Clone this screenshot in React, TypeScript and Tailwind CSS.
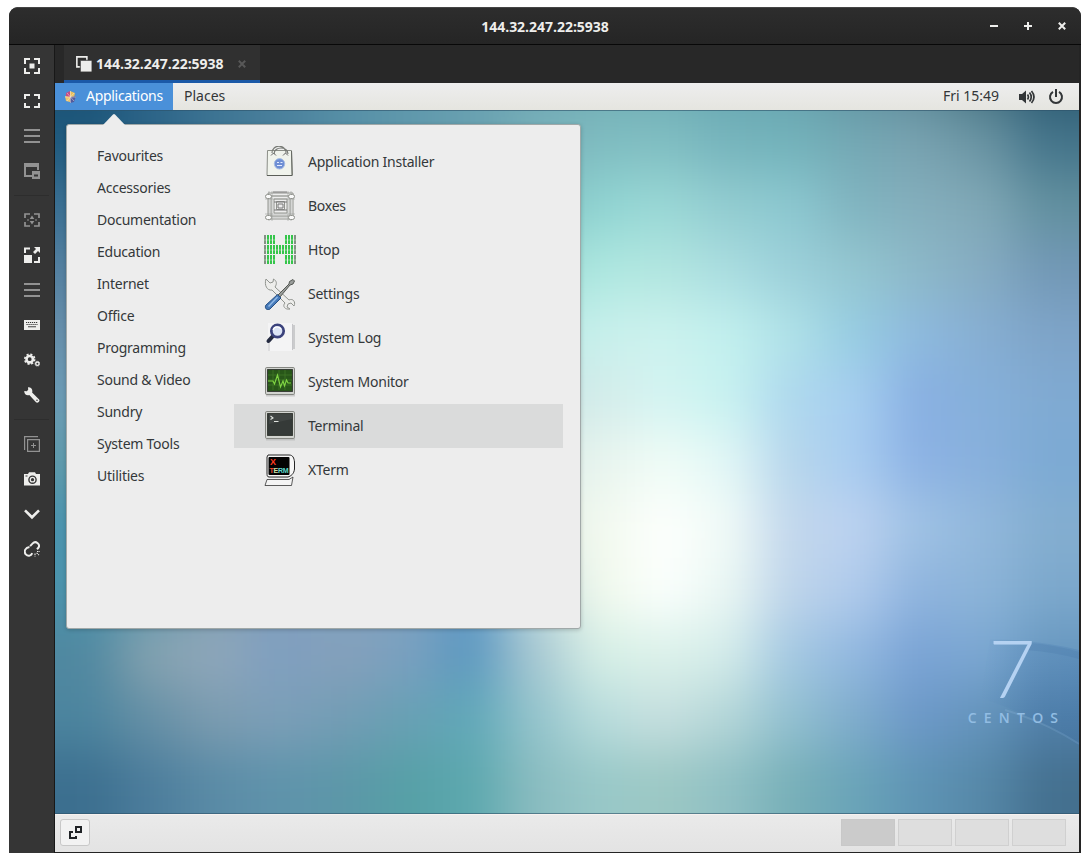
import type { ReactNode } from "react";

const wallpaper: string[][] = [
  "1a5174 2c6488 3d7493 4a809c 568fa6 5f98ac 68a0b0 70a8b4 70acb4 6eabb4 66a6b0 66a2ae 5f92a0 5a8796 44707f 2a5870",
  "1f5a7e 2c6488 3d7493 4a809c 568fa6 5f98ac 68a0b0 78b0ba 7fbcc0 80bec2 76b4bc 72b2ba 74a8b4 78a2b0 6a94a3 44748a",
  "3a6f92 3a6f92 4a809c 568fa6 5f98ac 68a0b0 70a8b4 80c0c0 90d4d2 9ad8d6 92ccd0 8cc8d0 80b4c0 84aebc 80a8b6 62909f",
  "5480a0 5480a0 568fa6 5f98ac 68a0b0 70a8b4 80b0b8 98d8d4 aee8e0 b2e6e0 aadde0 9cd0da 94c6d0 8cb8c8 86acc2 7298b6",
  "678fab 678fab 6794b0 6794b0 7fa4b8 7fa4b8 90c0c0 b8e8e4 c8f0ec ccf2ee c2f0ee b0e2e8 96cce2 8ebade 86aed2 7ea4c8",
  "6b9bb5 6b9bb5 6794b0 6794b0 7fa4b8 7fa4b8 90c0c0 c4e4e2 d4ecea d4f4f2 c8f2f0 aed8ee a6cef0 88afe2 86b0da 80aad2",
  "5f9aab 5f9aab 6794b0 6794b0 7fa4b8 7fa4b8 90c0c0 d8ece8 e8f4ee f0fcf6 e2f7f6 b6d6ec a8ccf0 8cb2e4 88b0dc 7caad4",
  "4a93ae 4a93ae 6794b0 6794b0 7fa4b8 7fa4b8 90c0c0 e0ece6 f2f9ee fdfffd f1fbf7 c2d7ec bcd2f0 9fc2e4 92b8dc 84aed0",
  "4b93ac 5f98b0 809fb0 809fbd 7fa4c0 7fa4c0 5f98c8 bcd8dc f1f9ec fbfffd eaf7f3 bed4ea b0cbec 8fb4de 8cb4d8 7ca8cc",
  "5088a0 86a3b0 8fa7bb 7f9fc0 86a0bb 7aa0c0 5c98c0 a8c8d2 d6efe6 dcf2ea d4ecea a4c8e2 92b8e0 7aa3d5 7ca8d2 6898c0",
  "4c859f 6690a6 7c9cb0 7c9fb8 739db5 68a0b4 60a8b8 94c4cc b8dcdc c6dfdf b4d6d8 92c0d0 7faccc 6c98c8 6494bc 507fa8",
  "3c6f8f 4c7d9c 5a8ba6 5f93ab 5c97a8 56a0a6 5ca8ae 8abcc0 98c8c8 9cc8c4 90c0c4 78b0b8 6aa4b8 5e94b4 5688a8 44708f",
].map((r) => r.split(" "));

function Wallpaper() {
  const rows = [...wallpaper, wallpaper[wallpaper.length - 1]];
  return (
    <svg className="absolute inset-0" width="1024" height="704" viewBox="0 0 1024 704" aria-hidden="true">
      <defs>
        <filter id="soft" filterUnits="userSpaceOnUse" x="-130" y="-130" width="1290" height="970" colorInterpolationFilters="sRGB">
          <feGaussianBlur stdDeviation="25" />
        </filter>
        <linearGradient id="flare" x1="0" x2="1">
          <stop offset="0" stopColor="#3c70ab" stopOpacity="0" />
          <stop offset=".5" stopColor="#3c70ab" stopOpacity=".16" />
          <stop offset="1" stopColor="#3c70ab" stopOpacity=".22" />
        </linearGradient>
      </defs>
      <g filter="url(#soft)">
        {rows.map((row, j) =>
          [row[0], ...row, row[15]].map((c, i) => (
            <rect
              key={`${j}-${i}`}
              x={(i - 1) * 64 - (i === 0 ? 60 : 0)}
              y={(j - 1) * 64 - (j === 0 ? 60 : 0)}
              width={i === 0 || i === 17 ? 125 : 65}
              height={j === 0 || j === rows.length - 1 ? 125 : 65}
              fill={`#${c}`}
            />
          )),
        )}
      </g>
      <path d="M935 529Q985 530 1024 540V636Q980 605 925 588Z" fill="url(#flare)" />
      <path d="M976 533Q1000 535 1024 542V549Q1000 542 970 540Z" fill="#4776a9" opacity=".25" />
      <path d="M950 600Q990 612 1024 634" stroke="#a3c8e8" strokeOpacity=".18" strokeWidth="2" fill="none" />
      <path d="M0 .5H1024M0 703.5H1024" stroke="#2d5269" strokeOpacity=".6" />
    </svg>
  );
}

function Glyph({ children, dim, size = 16 }: { children: ReactNode; dim?: boolean; size?: number }) {
  return (
    <svg width={size} height={size} viewBox="0 0 16 16" className={dim ? "text-[#929292]" : "text-[#eeeeec]"} fill="none" stroke="currentColor" strokeWidth="2" aria-hidden="true">
      {children}
    </svg>
  );
}

const corners = "M1 6V1H6M10 1H15V6M15 10V15H10M6 15H1V10";
const wideCorners = "M1 6V2H6M10 2H15V6M15 10V14H10M6 14H1V10";
const lines = <path d="M0 2H16M0 8H16M0 14H16" />;

const tools: { icon: ReactNode; dim?: boolean; name: string }[] = [
  { name: "fit", icon: <><path d={corners} /><path d="M5.5 5.5h5v5h-5z" fill="currentColor" stroke="none" /></> },
  { name: "fullscreen", icon: <path d={wideCorners} /> },
  { name: "menu-a", icon: lines, dim: true },
  { name: "window", dim: true, icon: <><path d="M8 13H1V3H14V7" /><path d="M0 0H15V4H0zM8 8h8v8H8z" fill="currentColor" stroke="none" /><path d="M10 11.5h4v2h-4z" fill="#353535" stroke="none" /></> },
  { name: "sep-a", icon: null },
  { name: "dynamic", dim: true, icon: <><path d={wideCorners} strokeWidth="1.7" /><path d="M8 3.5L10.3 7H5.7zM8 12.5L5.7 9h4.6zM3.5 7h1v2h-1zM11.5 7h1v2h-1z" fill="currentColor" stroke="none" /></> },
  { name: "scale", icon: <><path d="M1 6V1.5H6M15 10V15H10" /><path d="M0 8h8v8H0zM10 0h6v6l-2-2-3 3-2-2 3-3z" fill="currentColor" stroke="none" /></> },
  { name: "menu-b", icon: lines, dim: true },
  { name: "keyboard", icon: <><path d="M0 3H16V13H0z" fill="currentColor" stroke="none" /><path d="M2 5.5h12M2.5 7.5h11" stroke="#353535" strokeWidth="1.2" strokeDasharray="1.2 .8" /><path d="M4 9.7h8" stroke="#6a6a6a" strokeWidth="1.3" /></> },
  { name: "settings", icon: <><circle cx="5.7" cy="7.2" r="3.2" strokeWidth="2.6" /><circle cx="5.7" cy="7.2" r="4.9" strokeWidth="1.7" strokeDasharray="2.1 1.75" /><circle cx="13.4" cy="11.7" r="1.7" strokeWidth="1.4" /><circle cx="13.4" cy="11.7" r="2.5" strokeWidth=".7" strokeDasharray="1 .95" /></> },
  { name: "tools", icon: <path d="M4 .3L4.2 2.7 2.8 4.2 .3 4C0 7 2.4 9 5.3 8.1L12 15.2C13.5 16.7 16.6 14.1 15.1 12.4L8.1 5.4C9.1 2.6 7 0 4 .3zM13 12.5a.8 .8 0 1 1 0 1.6.8 .8 0 0 1 0-1.6z" fill="currentColor" fillRule="evenodd" stroke="none" /> },
  { name: "sep-b", icon: null },
  { name: "duplicate", dim: true, icon: <><path d="M.6 14V.6H14M3.6 3.6H15.4V15.4H3.6z" strokeWidth="1.2" /><path d="M9.5 7v5M7 9.5h5" strokeWidth="1" /></> },
  { name: "screenshot", icon: <><path d="M0 3H4L5 1.3H11L12 3H16V14.5H0z" fill="currentColor" stroke="none" /><circle cx="8.5" cy="8.7" r="3.6" stroke="#353535" strokeWidth="1.4" /><circle cx="8.5" cy="8.7" r="1.6" fill="#353535" stroke="none" /><path d="M1.5 5h2" stroke="#353535" strokeWidth="1" /></> },
  { name: "more", icon: <path d="M1 4.4L8 11.3 15 4.4" strokeWidth="2.6" /> },
  { name: "disconnect", icon: <><path d="M6.1 5.1L8.7 2.4C11.6-.7 17.3 3.5 14.2 7L13 8.3M5.5 6C1.6 6.4-.7 10.1 1.8 13.4 4.4 16 7.4 14.5 8.2 12.2" /><path d="M11 12.5v3M12.6 11.8L15 14M13 10.5h2.8" strokeWidth="1.1" strokeDasharray="1.5 .7" /></> },
];

const categories = ["Favourites", "Accessories", "Documentation", "Education", "Internet", "Office", "Programming", "Sound & Video", "Sundry", "System Tools", "Utilities"];

function Monitor({ children, screen }: { children: ReactNode; screen: string }) {
  return (
    <>
      <path d="M2 29h29" stroke="#aaa" strokeWidth="3" opacity=".5" />
      <rect x="1.5" y="1.5" width="29" height="27" rx="1.3" fill="#d2d4d0" stroke="#858782" />
      <rect x="3.6" y="3.6" width="24.8" height="21.8" fill={screen} stroke="#30342f" />
      {children}
    </>
  );
}

const bars: ReactNode[] = [0, 1, 2].flatMap((row) =>
  Array.from({ length: 11 }, (_, i) =>
    row !== 1 && i > 3 && i < 7 ? null : (
      <g key={`${row}-${i}`}>
        <rect x={i * 3} y={row * 10 + 1} width="2" height="9" fill={i === 0 || i === 10 ? "#849184" : "#35c54b"} />
        <path d={`M${i * 3} ${row * 10 + 6}h2`} stroke="#94df9a" strokeWidth=".8" />
      </g>
    ),
  ),
);

const apps: { label: string; icon: ReactNode; active?: boolean }[] = [
  {
    label: "Application Installer",
    icon: (
      <>
        <path d="M3.5 4.5H27.5L28.5 29.5H3z" fill="#f0f3ec" stroke="#8b8e87" />
        <path d="M27.5 5L28 29" stroke="#656862" />
        <path d="M3 29.5H28" stroke="#5b5e58" />
        <path d="M8 7C8-2 22-2 22 7M10 8C10 0 24 0 24 8" fill="none" stroke="#777a75" strokeWidth="1.2" />
        <path d="M7 9.5L9.5 7 12 9.5M19 9.5l2.5-2.5L24 9.5" fill="none" stroke="#666" />
        <circle cx="15.5" cy="17.8" r="5.2" fill="#6e8fd4" stroke="#a5bce2" />
        <path d="M13 16.5h2M16.5 16.5h2M13 19.5h5" fill="none" stroke="#e4ecff" strokeWidth="1.1" />
      </>
    ),
  },
  {
    label: "Boxes",
    icon: (
      <g fill="none" stroke="#92948f" strokeWidth="1">
        <path d="M4 3h25v26H4zM7 6h19v20H7zM10 9h13v14H10zM12.5 11.5h8v8h-8z" />
        <path d="M1 6h30M1 9h30M1 24h30M1 27h30M5 1v30M8 1v30M24 1v30M27 1v30" opacity=".5" />
        <path d="M9 2h14M10 12h13M10 20h13M14 14h5v4h-5z" stroke="#777" />
        <g fill="#fafafa"><rect x="1.5" y="4.5" width="6" height="4" rx="2" /><rect x="24.5" y="4.5" width="6" height="4" rx="2" /><rect x="1.5" y="25.5" width="6" height="4" rx="2" /><rect x="24.5" y="25.5" width="6" height="4" rx="2" /></g>
      </g>
    ),
  },
  { label: "Htop", icon: bars },
  {
    label: "Settings",
    icon: (
      <>
        <path d="M2 1L6 5 9 4 9.5 1C13 3 13 6 11 9L25 22C29 20 32 24 30 28L27 25 24 26 23 29 26 31C21 32 18 28 21 25L8 12C3 13 0 7 2 1z" fill="#ededeb" stroke="#91948f" />
        <path d="M14 17L25 6 25.5 3.5 29 1.5 30.5 3 29 6 26 7 16 19" fill="#999c9a" stroke="#555954" />
        <path d="M13.5 16.5L17 20 6 31C3 33 0 30 2 27z" fill="#477ab9" stroke="#285184" />
        <path d="M13.5 19L4.5 28.5" stroke="#91b9e6" strokeWidth="1.5" />
      </>
    ),
  },
  {
    label: "System Log",
    icon: (
      <>
        <path d="M4 1H28V29H4z" fill="#f4f4f5" />
        <path d="M5 17V29M28.5 2V28" stroke="#c5c5c8" /><path d="M30 3V27" stroke="#a8a9ac" />
        <path d="M9 14L4.5 19" stroke="#242a40" strokeWidth="4" strokeLinecap="round" />
        <circle cx="13.5" cy="9" r="6.2" fill="#dce4f5" stroke="#3b427c" strokeWidth="2.7" />
        <path d="M9 8c1-4 6-4 8-1" stroke="#fff" strokeWidth="1.3" fill="none" />
      </>
    ),
  },
  { label: "System Monitor", icon: <Monitor screen="#285719"><path d="M4 9h24M4 14h24M4 19h24M9 4v20M15 4v20M21 4v20" stroke="#427b28" strokeWidth=".7" /><path d="M4 15h5l1.5 3 3-9 3 12 2.5-6 1.5 5 2-6 1.5 3h3" fill="none" stroke="#80d643" strokeWidth="1.1" /></Monitor> },
  { label: "Terminal", active: true, icon: <Monitor screen="#353a38"><path d="M5 14L28 9V4H5z" fill="#fff" opacity=".06" /><path d="M6.5 6l2.5 2-2.5 1.5M10 11.5h4.5" fill="none" stroke="#e0e4df" strokeWidth="1.1" /></Monitor> },
  {
    label: "XTerm",
    icon: (
      <>
        <path d="M4 1H25C29 1 30 4 30.5 8V15C30 20 27 22 24 23H5C3 23 3 21 3 19V3z" fill="#f7f7f7" stroke="#252525" />
        <rect x="4.5" y="3" width="21" height="18" rx="1" fill="#030303" />
        <path d="M3 25.5H25L29 23 27.5 31.5H1z" fill="#f4f4f4" stroke="#333" strokeWidth=".8" />
        <text x="6" y="10.5" fontSize="9" fontFamily="Liberation Sans" fill="#ff3b20" fontWeight="700">X</text>
        <text x="5.5" y="18.8" fontSize="7" fontFamily="Liberation Sans" fontWeight="700" textLength="19" lengthAdjust="spacingAndGlyphs">
          <tspan fill="#ef4b2e">T</tspan><tspan fill="#cde0a6">E</tspan><tspan fill="#5cd8cd">RM</tspan>
        </text>
      </>
    ),
  },
];

function TitleBar() {
  return (
    <header className="grid h-[38px] shrink-0 grid-cols-[1fr_auto_1fr] items-center rounded-t-[8px] border-t border-b border-t-[#454545] border-b-[#080808] bg-linear-to-b from-[#2d2d2d] to-[#252525] text-[#eeeeec]">
      <span />
      <h1 className="pt-[2px] font-['Open_Sans',sans-serif] text-[14px] leading-4 font-bold tracking-[-0.03px]">144.32.247.22:5938</h1>
      <div className="flex items-center justify-end gap-[26px] pr-[15px]">
        <svg width="8" height="8" viewBox="0 0 8 8"><path d="M0 4H8" stroke="currentColor" strokeWidth="2" /></svg>
        <svg width="8" height="8" viewBox="0 0 8 8"><path d="M0 4H8M4 0V8" stroke="currentColor" strokeWidth="2" /></svg>
        <svg width="8" height="8" viewBox="0 0 8 8"><path d="M.8 .8L7.2 7.2M7.2 .8L.8 7.2" stroke="currentColor" strokeWidth="2" /></svg>
      </div>
    </header>
  );
}

function Sidebar() {
  return (
    <nav className="flex w-[46px] shrink-0 flex-col border-r border-[#181818] bg-[#353535] pt-[3px]">
      {tools.map((t) =>
        t.icon === null ? (
          <div key={t.name} className="mx-[5px] flex h-[14px] items-center"><div className="h-px w-full bg-[#2d2d2d]" /></div>
        ) : (
          <button key={t.name} className="flex h-[35px] items-center pl-[15px]"><Glyph dim={t.dim}>{t.icon}</Glyph></button>
        ),
      )}
    </nav>
  );
}

function TabBar() {
  return (
    <div className="flex h-[38px] shrink-0 bg-[#282828] pl-[9px]">
      <div className="flex w-[196px] items-center border-b-[3px] border-[#1b59a8] bg-[#303030] pt-[2px] pl-[12px] text-[#eeeeec]">
        <svg width="16" height="16" viewBox="0 0 15 15"><path d="M.8 .8H10.2V10.2H.8z" fill="none" stroke="currentColor" strokeWidth="1.5" /><path d="M4 4H15V15H4z" fill="currentColor" stroke="#303030" strokeWidth=".8" /></svg>
        <span className="ml-[4px] w-[128px] font-['Open_Sans',sans-serif] text-[14px] leading-4 font-bold tracking-[-0.03px]">144.32.247.22:5938</span>
        <svg className="ml-[14px]" width="8" height="8" viewBox="0 0 8 8"><path d="M.8 .8L7.2 7.2M7.2 .8L.8 7.2" stroke="#585858" strokeWidth="2" /></svg>
      </div>
    </div>
  );
}

function TopPanel() {
  return (
    <div className="flex h-[27px] shrink-0 bg-linear-to-b from-[#eeeeee] to-[#e5e5e0] text-[14px] text-[#333638]">
      <div className="flex w-[118px] items-center bg-[#4a90d9] pl-[9px] text-white">
        <svg width="13" height="14" viewBox="0 0 13 14"><path d="M2 3l4-2v6H2z" fill="#c64b86" /><path d="M6 1l5 2-1 4H6z" fill="#e9c15c" /><path d="M1 6l5 1v5l-4-1z" fill="#efc46b" /><path d="M6 7l6-1-2 6-4 1z" fill="#525b9d" /><path d="M3 3l7 8M10 3l-7 8M6.5 1v12M1 7h11" stroke="#f5e6dc" strokeWidth=".5" /></svg>
        <span className="ml-[9px] pb-[2px] tracking-[-0.3px]">Applications</span>
      </div>
      <div className="flex items-center pb-[2px] pl-[11px]">Places</div>
      <div className="ml-auto flex items-center pr-[15px]">
        <span className="pb-[2px]">Fri 15:49</span>
        <svg className="ml-[20px]" width="16" height="16" viewBox="0 0 16 16" fill="none" stroke="currentColor" strokeWidth="1.7"><path d="M0 5h3l4-3.5v13L3 11H0z" fill="currentColor" stroke="none" /><path d="M8.5 5.5q1.8 2.5 0 5M10.5 3.5q3.5 4.5 0 9M12.5 2q5 6 0 12" /></svg>
        <svg className="ml-[13px]" width="16" height="16" viewBox="0 0 16 16" fill="none" stroke="currentColor" strokeWidth="2"><path d="M5 2.8a6 6 0 1 0 6 0M8 0v8" /></svg>
      </div>
    </div>
  );
}

function ApplicationsMenu() {
  return (
    <div className="absolute top-[14px] left-[11px] flex h-[505px] w-[515px] rounded-[3px] border border-[#a0a8a8] bg-[#ededed] text-[14px] tracking-[-0.24px] text-[#34383a] shadow-[0_1px_4px_#0003]">
      <svg className="absolute -top-[12px] left-[34px]" width="26" height="13" viewBox="0 0 26 13"><path d="M1 13L12 1.5Q13 .5 14 1.5L25 13z" fill="#ededed" /></svg>
      <ul className="w-[167px] shrink-0 pt-[14px] pl-[30px]">
        {categories.map((c) => <li key={c} className="flex h-8 items-center whitespace-nowrap">{c}</li>)}
      </ul>
      <ul className="w-[329px] pt-[15px]">
        {apps.map((a) => (
          <li key={a.label} className={a.active ? "flex h-11 items-center bg-[#dadbdb] pl-[30px]" : "flex h-11 items-center pl-[30px]"}>
            <svg width="32" height="32" viewBox="0 0 32 32" aria-hidden="true">{a.icon}</svg>
            <span className="ml-[12px] pb-[2px]">{a.label}</span>
          </li>
        ))}
      </ul>
    </div>
  );
}

function BottomPanel() {
  return (
    <footer className="flex h-[38px] shrink-0 items-start border-t border-[#f7f1ee] bg-linear-to-b from-[#eaeaea] to-[#e3e3e3] pt-[4px] pr-[13px] pl-[5px]">
      <button className="flex h-[27px] w-[30px] items-center justify-center rounded-[3px] border border-[#c8c8c8] bg-[#f2f2f2]">
        <svg width="15" height="15" viewBox="0 0 15 15" fill="none" stroke="#202326" strokeWidth="2"><path d="M8 2h5v5H8zM5 7H2v6h6v-2" /></svg>
      </button>
      <div className="ml-auto flex gap-[3px]">
        <div className="h-[27px] w-[54px] border border-[#c8c8c8] bg-[#cbcbcb]" />
        <div className="h-[27px] w-[54px] border border-[#d0d0d0] bg-[#dedede]" />
        <div className="h-[27px] w-[54px] border border-[#d0d0d0] bg-[#dedede]" />
        <div className="h-[27px] w-[54px] border border-[#d0d0d0] bg-[#dedede]" />
      </div>
    </footer>
  );
}

export default function App() {
  return (
    <main className="h-[862px] w-[1090px] overflow-hidden bg-white px-[9px] pt-[7px] font-['Noto_Sans',sans-serif]">
      <div className="flex h-[846px] w-[1072px] flex-col overflow-hidden rounded-t-[9px] bg-[#242424]">
        <TitleBar />
        <div className="flex min-h-0 flex-1">
          <Sidebar />
          <div className="flex w-[1024px] flex-col">
            <TabBar />
            <TopPanel />
            <div className="relative h-[704px] shrink-0 overflow-hidden">
              <Wallpaper />
              <ApplicationsMenu />
              <div className="absolute top-[516px] right-[14px] flex w-[104px] flex-col items-center text-[#b5d2f2]">
                <span className="ml-[-2px] font-['Lato',sans-serif] text-[81px] leading-[82px] font-light">7</span>
                <span className="pl-[7px] font-['Open_Sans',sans-serif] text-[14px] leading-5 font-semibold tracking-[7.2px] text-[#92bde3]">CENTOS</span>
              </div>
            </div>
            <BottomPanel />
          </div>
        </div>
      </div>
    </main>
  );
}
